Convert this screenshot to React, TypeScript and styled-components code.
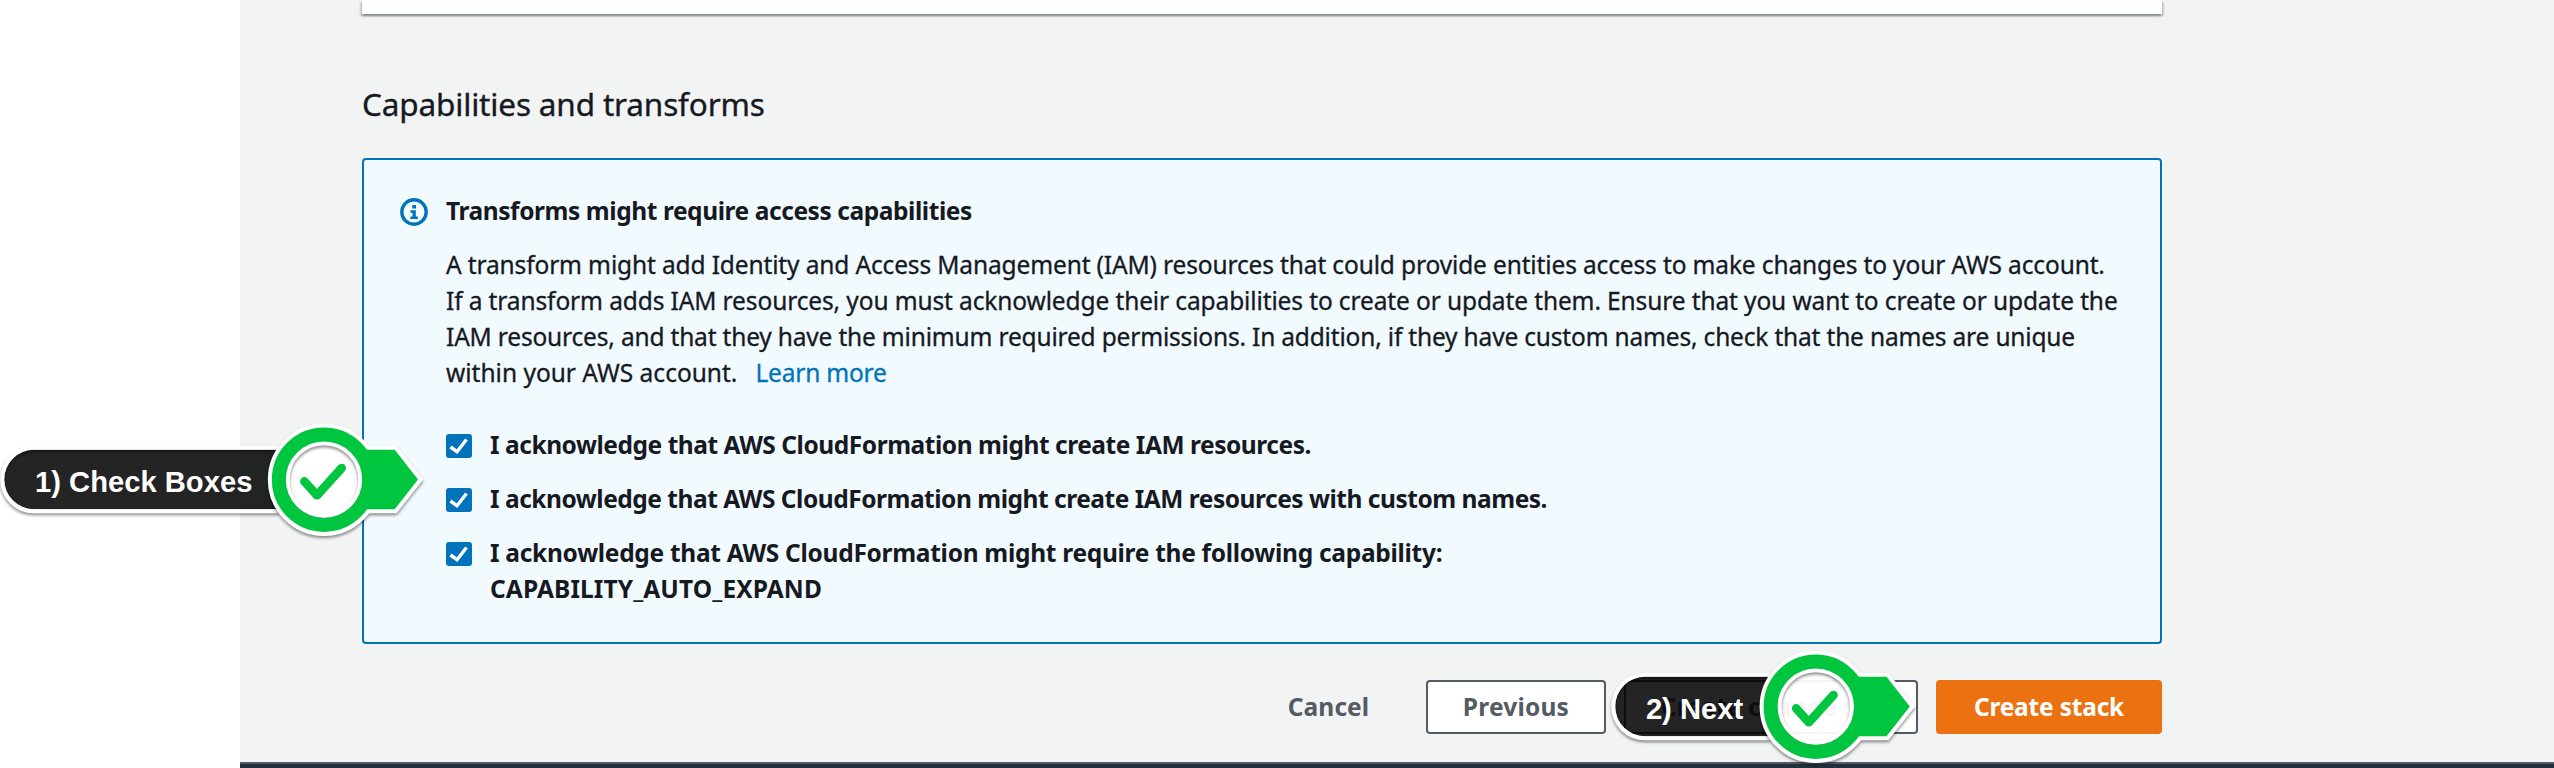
import React from 'react';
import styled, { createGlobalStyle, css } from 'styled-components';

const GlobalStyle = createGlobalStyle`
  * { box-sizing: border-box; }
  html, body { margin: 0; padding: 0; overflow: hidden; background: #fff; }
  body {
    font-family: 'Noto Sans', 'Open Sans', sans-serif;
    color: #16191f;
  }
`;

const Page = styled.div`
  position: relative;
  display: flex;
  flex-direction: column;
  width: 2554px;
  height: 768px;
  padding-left: 240px;
  overflow: hidden;
`;

const Content = styled.main`
  flex: none;
  height: 762px;
  padding: 0 392px 0 122px;
  background: #f2f3f3;
`;

const PreviousCard = styled.section`
  height: 14px;
  background: #fff;
  box-shadow:
    0 2px 2px 0 rgba(0, 28, 36, 0.3),
    2px 2px 2px 0 rgba(0, 28, 36, 0.15),
    -2px 2px 2px 0 rgba(0, 28, 36, 0.15);
`;

const SectionTitle = styled.h2`
  margin: 70px 0 34px;
  font-size: 31.5px;
  line-height: 40px;
  font-weight: 400;
  letter-spacing: -0.16px;
  -webkit-text-stroke: 0.35px currentColor;
`;

const Alert = styled.section`
  display: flex;
  gap: 18px;
  height: 486px;
  padding: 33px 36px 31px;
  border: 2px solid #0073bb;
  border-radius: 4px;
  background: #f1faff;
`;

const InfoIcon = styled.svg`
  flex: none;
  width: 28px;
  height: 28px;
  margin-top: 5px;
`;

const AlertBody = styled.div`
  display: flex;
  flex-direction: column;
`;

const Line = styled.span<{ $spacing?: number }>`
  display: block;
  white-space: pre;
  font-size: 24.5px;
  line-height: 36px;
  letter-spacing: ${({ $spacing = 0 }) => $spacing}px;
`;

const AlertTitle = styled.h3`
  margin: 0 0 18px;
  font-weight: 700;
`;

const Paragraph = styled.p`
  margin: 0 0 36px;
  -webkit-text-stroke: 0.3px currentColor;
`;

const Link = styled.a`
  margin-left: 18px;
  color: #0073bb;
  letter-spacing: -0.2px;
  text-decoration: none;
`;

const CheckList = styled.div`
  display: flex;
  flex-direction: column;
  gap: 18px;
`;

const CheckRow = styled.label`
  display: flex;
  align-items: flex-start;
  gap: 18px;
  font-weight: 700;
`;

const CheckBox = styled.svg`
  flex: none;
  width: 26px;
  height: 24px;
  margin-top: 7px;
`;

const Actions = styled.div`
  display: flex;
  justify-content: flex-end;
  gap: 18px;
  margin-top: 36px;
`;

const variants = {
  link: css`
    border-color: transparent;
    background: transparent;
    color: #545b64;
  `,
  normal: css`
    border-color: #545b64;
    background: #fff;
    color: #545b64;
  `,
  primary: css`
    border-color: #ec7211;
    background: #ec7211;
    color: #fff;
  `,
};

const Button = styled.button<{ $variant: keyof typeof variants; $width: number; $spacing?: number }>`
  width: ${({ $width }) => $width}px;
  height: 54px;
  padding: 0;
  border: 2px solid;
  border-radius: 4px;
  font: 700 24.5px/36px 'Noto Sans', 'Open Sans', sans-serif;
  letter-spacing: ${({ $spacing = 0 }) => $spacing}px;
  white-space: nowrap;
  ${({ $variant }) => variants[$variant]}
`;

const Footer = styled.footer`
  flex: none;
  height: 6px;
  border-top: 2px solid #545b64;
  background: #232f3e;
`;

const CalloutBox = styled.div<{ $left: number; $top: number }>`
  position: absolute;
  left: ${({ $left }) => $left}px;
  top: ${({ $top }) => $top}px;
`;

const CalloutShape = styled.svg`
  display: block;
  overflow: visible;
`;

const RingShadow = styled.g`
  filter: drop-shadow(0 2px 1.5px rgba(0, 0, 0, 0.45));
`;

const CalloutLabel = styled.span`
  position: absolute;
  left: 35px;
  top: 44px;
  font: 700 29.2px/36px 'Liberation Sans', Arial, sans-serif;
  white-space: nowrap;
  color: #fff;
`;

/* Pill with a label, a ringed check mark and an arrow head; tail is the distance from the pill's left end to the ring's centre. */
function Callout({ left, top, tail, children }: { left: number; top: number; tail: number; children: string }) {
  const cx = tail + 4;
  return (
    <CalloutBox $left={left} $top={top}>
      <CalloutShape width={cx + 100} height={120}>
        <path d={`M${cx - 43} 29.7H34a29.8 29.8 0 0 0 0 59.6H${cx - 43}Z`} fill="rgba(0,0,0,0.86)" />
        <RingShadow>
          <path d={`M${cx - 46} 27.7H34a31.8 31.8 0 0 0 0 63.6H${cx - 46}`} fill="none" stroke="#fff" strokeWidth="4" />
        </RingShadow>
        <RingShadow>
          <circle cx={cx} cy="59.7" r="46" fill="none" stroke="#fff" strokeWidth="20.4" />
          <path d={`M${cx + 40} 25.7H${cx + 72.6}L${cx + 99.3} 59.5L${cx + 72.6} 93.3H${cx + 40}Z`} fill="#fff" />
        </RingShadow>
        <circle cx={cx} cy="59.6" r="38" fill="#fff" fillOpacity="0.94" />
        <RingShadow>
          <circle cx={cx} cy="59.5" r="36.3" fill="none" stroke="#fff" strokeWidth="4" />
        </RingShadow>
        <circle cx={cx} cy="59.7" r="45.2" fill="none" stroke="#00c53e" strokeWidth="14" />
        <path d={`M${cx + 42} 29.7H${cx + 70.7}L${cx + 94} 59.5L${cx + 70.7} 89.3H${cx + 42}L${cx + 48} 59.5Z`} fill="#00c53e" />
        <path
          d={`M${cx - 19.6} 61.4L${cx - 7} 75.3L${cx + 17.7} 48`}
          fill="none"
          stroke="#00c53e"
          strokeWidth="8.6"
          strokeLinecap="round"
          strokeLinejoin="round"
        />
      </CalloutShape>
      <CalloutLabel>{children}</CalloutLabel>
    </CalloutBox>
  );
}

const acknowledgements = [
  [{ text: 'I acknowledge that AWS CloudFormation might create IAM resources.', spacing: -0.455 }],
  [{ text: 'I acknowledge that AWS CloudFormation might create IAM resources with custom names.', spacing: -0.477 }],
  [
    { text: 'I acknowledge that AWS CloudFormation might require the following capability:', spacing: -0.29 },
    { text: 'CAPABILITY_AUTO_EXPAND', spacing: 0.1 },
  ],
];

export default function App() {
  return (
    <Page>
      <GlobalStyle />
      <Content>
        <PreviousCard />
        <SectionTitle>Capabilities and transforms</SectionTitle>
        <Alert>
          <InfoIcon viewBox="0 0 28 28">
            <circle cx="14" cy="14" r="12.2" fill="none" stroke="#0073bb" strokeWidth="3.4" />
            <path d="M12.2 7h3.8v3.4h-3.8zM10.4 12.2h5.4v6.2h2v2.6h-7.4v-2.6h2.1v-3.6h-2.1z" fill="#0073bb" />
          </InfoIcon>
          <AlertBody>
            <AlertTitle>
              <Line $spacing={-0.43}>Transforms might require access capabilities</Line>
            </AlertTitle>
            <Paragraph>
              <Line $spacing={-0.137}>
                A transform might add Identity and Access Management (IAM) resources that could provide entities access to make changes to your AWS account.
              </Line>
              <Line $spacing={-0.12}>
                If a transform adds IAM resources, you must acknowledge their capabilities to create or update them. Ensure that you want to create or update the
              </Line>
              <Line $spacing={-0.18}>
                IAM resources, and that they have the minimum required permissions. In addition, if they have custom names, check that the names are unique
              </Line>
              <Line>
                within your AWS account.
                <Link>Learn more</Link>
              </Line>
            </Paragraph>
            <CheckList>
              {acknowledgements.map((lines) => (
                <CheckRow key={lines[0].text}>
                  <CheckBox viewBox="0 0 26 24">
                    <rect width="26" height="24" rx="3" fill="#0073bb" />
                    <path d="M4.5 13L11 17.7L20.5 5.5" fill="none" stroke="#fff" strokeWidth="3.4" />
                  </CheckBox>
                  <div>
                    {lines.map(({ text, spacing }) => (
                      <Line key={text} $spacing={spacing}>{text}</Line>
                    ))}
                  </div>
                </CheckRow>
              ))}
            </CheckList>
          </AlertBody>
        </Alert>
        <Actions>
          <Button $variant="link" $width={159} $spacing={0.1}>Cancel</Button>
          <Button $variant="normal" $width={180} $spacing={0.2}>Previous</Button>
          <Button $variant="normal" $width={294}>Create change set</Button>
          <Button $variant="primary" $width={226} $spacing={-0.2}>Create stack</Button>
        </Actions>
      </Content>
      <Footer />
      <Callout left={0} top={420} tail={320}>1) Check Boxes</Callout>
      <Callout left={1610.9} top={647} tail={200.8}>2) Next</Callout>
    </Page>
  );
}
